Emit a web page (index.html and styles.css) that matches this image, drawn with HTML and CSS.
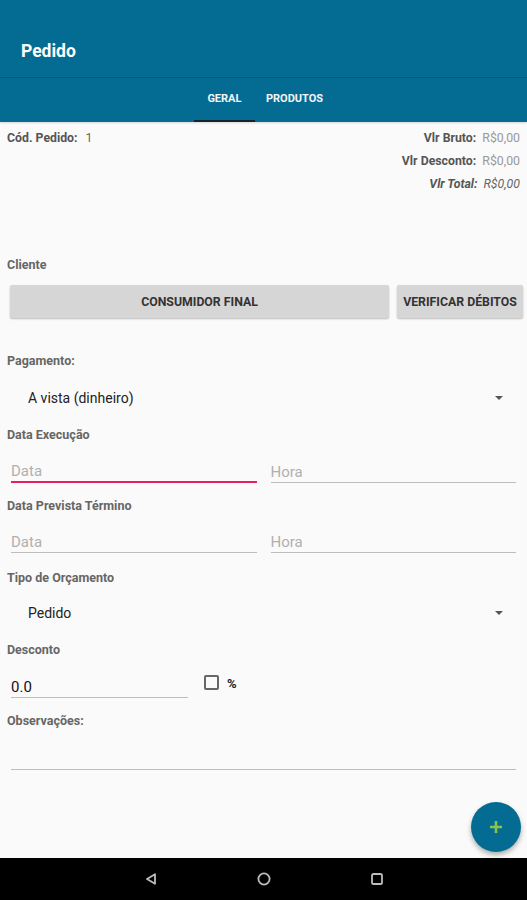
FILE: index.html
```html
<!DOCTYPE html>
<html lang="pt">
<head>
<meta charset="utf-8">
<title>Pedido</title>
<link rel="stylesheet" href="styles.css">
</head>
<body>
<div class="screen">
  <header class="appbar">
    <div class="title">Pedido</div>
  </header>
  <nav class="tabs">
    <div class="tab active">GERAL</div>
    <div class="tab">PRODUTOS</div>
  </nav>
  <main class="content">
    <section class="info">
      <div class="info-left"><span class="lbl">Cód. Pedido:</span> <span class="val">1</span></div>
      <div class="info-right">
        <div><span class="lbl">Vlr Bruto:</span> <span class="val">R$0,00</span></div>
        <div><span class="lbl">Vlr Desconto:</span> <span class="val">R$0,00</span></div>
        <div class="total"><span class="lbl">Vlr Total:</span> <span class="val">R$0,00</span></div>
      </div>
    </section>

    <div class="label l-cliente">Cliente</div>
    <div class="buttons">
      <div class="btn btn-main">CONSUMIDOR FINAL</div>
      <div class="btn btn-side">VERIFICAR DÉBITOS</div>
    </div>

    <div class="label l-pag">Pagamento:</div>
    <div class="spinner sp1"><span>A vista (dinheiro)</span><span class="arrow"></span></div>

    <div class="label l-exec">Data Execução</div>
    <div class="inputs in1">
      <div class="field focused"><span class="ph">Data</span></div>
      <div class="field"><span class="ph">Hora</span></div>
    </div>

    <div class="label l-prev">Data Prevista Término</div>
    <div class="inputs in2">
      <div class="field"><span class="ph">Data</span></div>
      <div class="field"><span class="ph">Hora</span></div>
    </div>

    <div class="label l-tipo">Tipo de Orçamento</div>
    <div class="spinner sp2"><span>Pedido</span><span class="arrow"></span></div>

    <div class="label l-desc">Desconto</div>
    <div class="desc-row">
      <div class="field desc-field"><span class="txt">0.0</span></div>
      <div class="check"><span class="box"></span><span class="pct">%</span></div>
    </div>

    <div class="label l-obs">Observações:</div>
    <div class="field obs-field"></div>
  </main>
  <div class="fab">
    <svg width="16" height="16" viewBox="0 0 16 16"><path d="M8 2v12M2 8h12" stroke="#8bc34a" stroke-width="2.6" stroke-linecap="butt"/></svg>
  </div>
  <footer class="navbar">
    <svg class="nav-ico" width="14" height="14" viewBox="0 0 14 14"><path d="M11 2.2 L3 7 L11 11.8 Z" fill="none" stroke="#bdbdbd" stroke-width="1.8" stroke-linejoin="round"/></svg>
    <svg class="nav-ico" width="14" height="14" viewBox="0 0 14 14"><circle cx="7" cy="7" r="5.6" fill="none" stroke="#bdbdbd" stroke-width="1.8"/></svg>
    <svg class="nav-ico" width="14" height="14" viewBox="0 0 14 14"><rect x="2" y="2" width="10" height="10" rx="1.6" fill="none" stroke="#bdbdbd" stroke-width="1.8"/></svg>
  </footer>
</div>
</body>
</html>
```
FILE: styles.css
```css
* { box-sizing: border-box; }
html, body { margin: 0; padding: 0; }
body {
  font-family: Roboto, "Liberation Sans", Arial, sans-serif;
  background: #fafafa;
  width: 527px;
  height: 900px;
  overflow: hidden;
}
.screen {
  position: relative;
  width: 527px;
  height: 900px;
  display: flex;
  flex-direction: column;
}
.appbar {
  height: 78px;
  background: #046c92;
  border-bottom: 1px solid #035b7c;
  padding: 41px 0 0 21px;
}
.title {
  color: #fff;
  font-size: 17.5px;
  font-weight: 700;
  line-height: 20px;
}
.tabs {
  height: 44px;
  background: #046c92;
  display: flex;
  justify-content: center;
  box-shadow: 0 1px 2px rgba(0,0,0,0.15);
}
.tab {
  color: #f2f6f8;
  font-size: 11px;
  font-weight: 700;
  line-height: 42px;
  padding: 0 8px;
  border-bottom: 2px solid transparent;
  text-align: center;
}
.tab.active {
  width: 61px;
  padding: 0;
  margin-left: -2px;
  margin-right: 3px;
  border-bottom-color: #17232b;
}
.content {
  flex: 1;
  padding: 0 7px 0 7px;
  position: relative;
}
.info {
  display: flex;
  justify-content: space-between;
  margin-top: 5px;
  font-size: 12.3px;
  line-height: 23px;
}
.info .lbl { font-weight: 700; color: #555; }
.info .val { color: #999; margin-left: 3px; }
.info-left .val { color: #666; margin-left: 5px; }
.info-right { text-align: right; }
.info-right .total { font-style: italic; }
.info-right .total .val { color: #666; }

.label {
  font-size: 12.5px;
  font-weight: 700;
  color: #666;
  line-height: 16px;
}
.l-cliente { margin-top: 61px; }
.buttons {
  display: flex;
  margin-top: 12px;
  padding-left: 3px;
  gap: 8px;
}
.btn {
  flex-shrink: 0;
  height: 33px;
  background: #d6d6d6;
  border-radius: 2px;
  box-shadow: 0 1px 2px rgba(0,0,0,0.25);
  font-size: 12.3px;
  font-weight: 700;
  color: #333;
  display: flex;
  align-items: center;
  justify-content: center;
  white-space: nowrap;
}
.btn-main { width: 379px; }
.btn-side { width: 126px; }

.l-pag { margin-top: 35px; }
.spinner {
  height: 36px;
  display: flex;
  align-items: center;
  justify-content: space-between;
  padding: 0 17px 0 21px;
  font-size: 14px;
  color: #222;
}
.sp1 { margin-top: 11px; }
.arrow {
  width: 0;
  height: 0;
  border-left: 4px solid transparent;
  border-right: 4px solid transparent;
  border-top: 4px solid #555;
}
.l-exec { margin-top: 11px; }
.inputs {
  display: flex;
  gap: 14px;
  padding: 0 4px;
}
.inputs .field { flex: 1; }
.field {
  display: flex;
  align-items: flex-end;
  border-bottom: 1.5px solid #bdbdbd;
  font-size: 15px;
  padding-bottom: 0;
}
.field.focused { border-bottom: 2px solid #e91e63; }
.ph { color: #b0b0b0; line-height: 20px; }
.in1 .field { height: 40px; }
.l-prev { margin-top: 15px; }
.in2 .field { height: 39px; }
.in2 .ph { line-height: 20px; }
.l-tipo { margin-top: 17px; }
.sp2 { margin-top: 9px; }
.l-desc { margin-top: 11px; }
.desc-row {
  display: flex;
  align-items: flex-start;
  padding-left: 4px;
}
.desc-field {
  width: 177px;
  height: 40px;
}
.txt { color: #111; line-height: 20px; }
.check {
  display: flex;
  align-items: center;
  margin-left: 16px;
  margin-top: 16px;
}
.box {
  width: 15px;
  height: 15px;
  border: 2px solid #666;
  border-radius: 2px;
}
.pct {
  font-size: 13px;
  font-weight: 700;
  color: #222;
  margin-left: 8px;
  margin-top: 2px;
}
.l-obs { margin-top: 15px; }
.obs-field {
  margin: 0 4px;
  height: 41px;
}
.fab {
  position: absolute;
  left: 471px;
  top: 802px;
  width: 50px;
  height: 50px;
  border-radius: 50%;
  background: #046c92;
  box-shadow: 0 3px 5px rgba(0,0,0,0.3);
  display: flex;
  align-items: center;
  justify-content: center;
}
.navbar {
  height: 42px;
  background: #000;
  display: flex;
  align-items: center;
  justify-content: center;
  gap: 99px;
}
.nav-ico { display: block; }
```
